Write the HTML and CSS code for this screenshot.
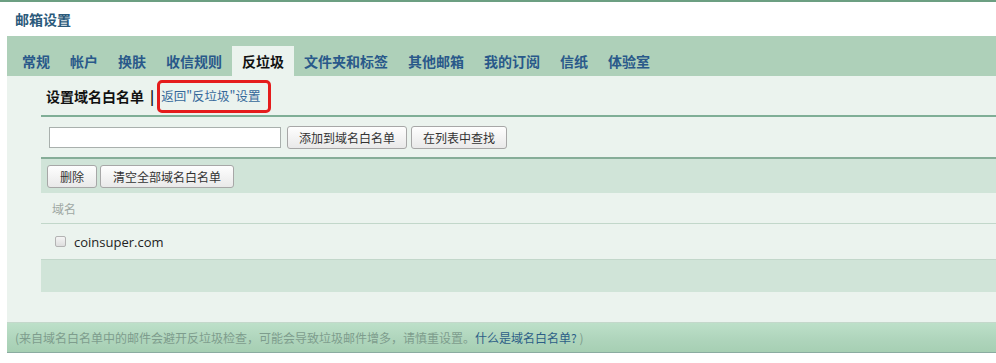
FILE: index.html
```html
<!DOCTYPE html>
<html lang="zh-CN">
<head>
<meta charset="utf-8">
<title>邮箱设置</title>
<link rel="stylesheet" href="styles.css">
</head>
<body>
<div class="page">
  <div class="title">邮箱设置</div>
  <div class="main">
    <ul class="tabs">
      <li class="tab">常规</li>
      <li class="tab">帐户</li>
      <li class="tab">换肤</li>
      <li class="tab">收信规则</li>
      <li class="tab active">反垃圾</li>
      <li class="tab">文件夹和标签</li>
      <li class="tab">其他邮箱</li>
      <li class="tab">我的订阅</li>
      <li class="tab">信纸</li>
      <li class="tab">体验室</li>
    </ul>
    <div class="panel">
      <div class="heading">
        <span class="heading-title">设置域名白名单</span>
        <span class="sep">|</span>
        <span class="back-wrap">
          <a class="back" href="#">返回"反垃圾"设置</a>
          <span class="mark"></span>
        </span>
      </div>
      <div class="form-row">
        <input class="domain-input" type="text">
        <button class="btn btn-add">添加到域名白名单</button>
        <button class="btn btn-find">在列表中查找</button>
      </div>
      <div class="toolbar">
        <button class="btn">删除</button>
        <button class="btn">清空全部域名白名单</button>
      </div>
      <div class="row head-row">域名</div>
      <div class="row data-row">
        <input class="check" type="checkbox">
        <span class="domain">coinsuper.com</span>
      </div>
      <div class="row empty-row"></div>
    </div>
    <div class="footer">
      <span class="note">(来自域名白名单中的邮件会避开反垃圾检查，可能会导致垃圾邮件增多，请慎重设置。</span><a class="help" href="#">什么是域名白名单?</a><span class="note"> )</span>
    </div>
  </div>
</div>
</body>
</html>
```
FILE: styles.css
```css
* {
  box-sizing: border-box;
}

html, body {
  margin: 0;
  padding: 0;
  background: #ffffff;
}

body {
  font-family: "Noto Sans", "Noto Sans CJK SC", sans-serif;
  font-size: 12px;
  color: #222;
  width: 996px;
  overflow: hidden;
}

.page {
  border-top: 2px solid #6c9f82;
}

.title {
  height: 34px;
  padding-left: 15px;
  line-height: 34px;
  font-size: 14px;
  font-weight: bold;
  color: #2b5a7b;
  font-family: "Noto Sans CJK SC", sans-serif;
}

.main {
  margin-left: 7px;
}

.tabs {
  list-style: none;
  margin: 0;
  padding: 10px 0 0 5px;
  height: 40px;
  background: #aed0b9;
  display: flex;
}

.tab {
  padding: 0 10px;
  height: 30px;
  line-height: 30px;
  font-size: 14px;
  font-weight: bold;
  color: #29598a;
  font-family: "Noto Sans CJK SC", sans-serif;
}

.tab.active {
  background: #ebf3ee;
  color: #111;
}

.panel {
  background: #ebf3ee;
  padding: 0 0 30px 34px;
}

.heading {
  display: flex;
  align-items: center;
  padding: 0 0 0 5px;
  border-bottom: 2px solid #7fae96;
  height: 41px;
  font-family: "Noto Sans CJK SC", sans-serif;
}

.heading-title {
  font-size: 14px;
  font-weight: bold;
  color: #111;
}

.sep {
  font-size: 14px;
  font-weight: bold;
  color: #111;
  margin: 0 7px 0 6px;
}

.back-wrap {
  position: relative;
}

.back {
  font-size: 12.5px;
  color: #35689a;
  text-decoration: none;
}

.mark {
  position: absolute;
  left: -4px;
  top: -6px;
  width: 114px;
  height: 33px;
  border: 3.5px solid #e51c1c;
  border-radius: 5px;
}

.form-row {
  height: 42px;
  display: flex;
  align-items: center;
  padding-left: 8px;
  border-bottom: 2px solid #86ad98;
}

.domain-input {
  width: 232px;
  height: 21px;
  border: 1px solid #a9b0ad;
  background: #fff;
  margin: 0 6px 0 0;
  padding: 0 3px;
  font: inherit;
}

.btn {
  height: 23px;
  padding: 0 11px;
  border: 1px solid #a7a7a7;
  border-radius: 3px;
  background: linear-gradient(#fefefe, #e9e9e9);
  font-family: "Noto Sans CJK SC", sans-serif;
  font-size: 12px;
  color: #333;
  line-height: 21px;
  margin: 0;
}

.btn-find {
  margin-left: 4px;
}

.toolbar {
  height: 34px;
  background: #d0e4d8;
  display: flex;
  align-items: center;
  gap: 3px;
  padding: 0 0 0 6px;
}

.toolbar .btn {
  padding: 0 12px;
}

.row {
  display: flex;
  align-items: center;
}

.head-row {
  height: 31px;
  padding-left: 11px;
  border-bottom: 1px solid #c2d7ca;
  color: #9ea8a3;
  font-family: "Noto Sans CJK SC", sans-serif;
  font-size: 12px;
}

.data-row {
  height: 36px;
  padding-left: 14px;
  border-bottom: 1px solid #c2d7ca;
}

.check {
  -webkit-appearance: none;
  appearance: none;
  width: 11px;
  height: 11px;
  margin: 0 8px 0 0;
  border: 1px solid #b3b3b3;
  border-radius: 2px;
  background: linear-gradient(#f4f4f4, #dedede);
}

.domain {
  font-family: "Open Sans", sans-serif;
  font-size: 13px;
  color: #222;
}

.empty-row {
  height: 32px;
  background: #d0e4d8;
}

.footer {
  height: 31px;
  border-top: 1px solid #c4d8cb;
  border-bottom: 1px solid #8aaba0;
  background: linear-gradient(#bde0c9, #aed4bb 60%, #a6cfb3);
  padding-left: 8px;
  line-height: 29px;
  font-family: "Noto Sans CJK SC", sans-serif;
  font-size: 12px;
  white-space: nowrap;
}

.note {
  color: #7e9d8d;
}

.help {
  color: #2d5f87;
  text-decoration: none;
}
```
